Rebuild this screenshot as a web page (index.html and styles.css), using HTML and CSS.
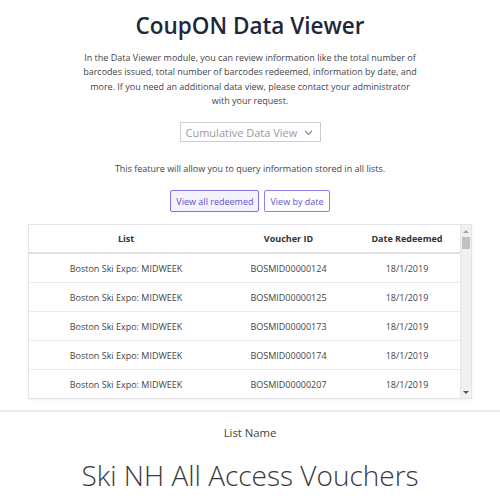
FILE: index.html
```html
<!DOCTYPE html>
<html>
<head>
<meta charset="utf-8">
<link rel="stylesheet" href="styles.css">
</head>
<body>
<div class="page">
  <h1 class="title">CoupON Data Viewer</h1>
  <p class="intro">In the Data Viewer module, you can review information like the total number of barcodes issued, total number of barcodes redeemed, information by date, and more. If you need an additional data view, please contact your administrator with your request.</p>
  <div class="select">
    <span>Cumulative Data View</span>
    <svg class="chev" width="9" height="6" viewBox="0 0 9 6"><path d="M1 1l3.5 3.5L8 1" fill="none" stroke="#888" stroke-width="1.1"/></svg>
  </div>
  <p class="note">This feature will allow you to query information stored in all lists.</p>
  <div class="buttons">
    <button class="btn active">View all redeemed</button>
    <button class="btn">View by date</button>
  </div>
  <div class="table-box">
    <div class="table-scroll">
      <table class="grid">
        <thead>
          <tr><th class="c1">List</th><th class="c2">Voucher ID</th><th class="c3">Date Redeemed</th></tr>
        </thead>
        <tbody>
          <tr><td>Boston Ski Expo: MIDWEEK</td><td>BOSMID00000124</td><td>18/1/2019</td></tr>
          <tr><td>Boston Ski Expo: MIDWEEK</td><td>BOSMID00000125</td><td>18/1/2019</td></tr>
          <tr><td>Boston Ski Expo: MIDWEEK</td><td>BOSMID00000173</td><td>18/1/2019</td></tr>
          <tr><td>Boston Ski Expo: MIDWEEK</td><td>BOSMID00000174</td><td>18/1/2019</td></tr>
          <tr><td>Boston Ski Expo: MIDWEEK</td><td>BOSMID00000207</td><td>18/1/2019</td></tr>
        </tbody>
      </table>
    </div>
    <div class="scrollbar">
      <span class="arrow up"></span>
      <span class="thumb"></span>
      <span class="arrow down"></span>
    </div>
  </div>
  <div class="divider"></div>
  <div class="list-label">List Name</div>
  <div class="list-name">Ski NH All Access Vouchers</div>
</div>
</body>
</html>
```
FILE: styles.css
```css
html, body { margin: 0; padding: 0; background: #fff; }
body { font-family: "Open Sans", "Noto Sans", sans-serif; color: #333; overflow: hidden; }
.page { display: flex; flex-direction: column; align-items: center; }
.title { margin: 11px 0 0; font-size: 22.5px; font-weight: 600; color: #1e2838; line-height: 30px; }
.intro { margin: 10px 0 0; width: 336px; font-size: 9px; line-height: 14.3px; text-align: center; color: #444; }
.select { margin-top: 14px; box-sizing: border-box; width: 141px; height: 20px; border: 1px solid #cfcfcf; display: flex; align-items: center; justify-content: space-between; padding: 0 7px 0 5px; font-size: 11px; color: #9a9a9a; }
.chev { margin-top: 1px; }
.note { margin: 20px 0 0; font-size: 9px; line-height: 14px; color: #444; }
.buttons { margin-top: 14px; display: flex; gap: 5px; }
.btn { font-family: inherit; font-size: 9px; height: 22px; padding: 0 5px; border: 1px solid #8c84e6; border-radius: 2px; background: #fff; color: #5e55cc; }
.btn.active { background: #f3f2fd; border-color: #7d74e0; }
.table-box { margin-top: 12px; width: 444px; height: 175px; box-sizing: border-box; border: 1px solid #e4e4e8; display: flex; box-shadow: 0 1px 2px rgba(0,0,0,0.06); }
.table-scroll { flex: 1; overflow: hidden; }
.grid { border-collapse: collapse; width: 100%; table-layout: fixed; font-size: 9px; }
.grid th, .grid td { padding: 0; text-align: center; }
.grid th { height: 27px; font-weight: 700; color: #333; border-bottom: 2px solid #e2e2e6; }
.grid td { height: 28px; color: #444; border-bottom: 1px solid #ececef; }
.c1 { width: 194px; }
.c2 { width: 131px; }
.scrollbar { width: 10px; background: #f0f0f0; border-left: 1px solid #e6e6e6; display: flex; flex-direction: column; align-items: center; }
.arrow { width: 0; height: 0; border-left: 3px solid transparent; border-right: 3px solid transparent; margin: 5px 0 4px; }
.arrow.up { border-bottom: 3px solid #a3a3a3; }
.arrow.down { border-top: 3px solid #555; margin-top: auto; margin-bottom: 4px; }
.thumb { width: 8px; height: 12px; background: #c1c1c1; }
.divider { align-self: stretch; height: 2px; background: #ececf0; margin-top: 11px; }
.list-label { margin-top: 13px; font-size: 11.3px; color: #444; line-height: 16px; }
.list-name { margin-top: 16px; font-size: 28px; font-weight: 300; color: #3a3a3a; line-height: 36px; }
```
